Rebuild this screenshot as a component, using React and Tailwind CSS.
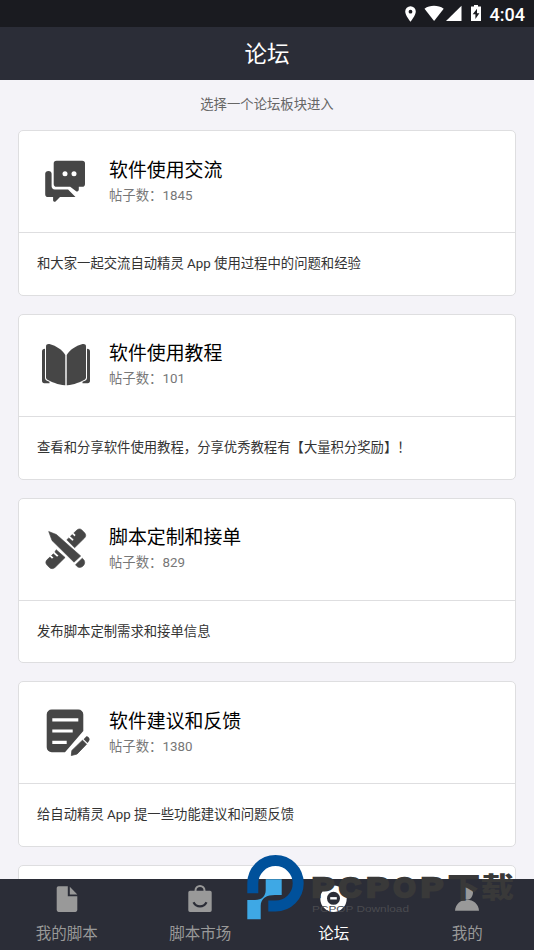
import React from 'react';

const ChatIcon = () => (
  <svg viewBox="0 0 48 48" className="size-12 -translate-y-px" fill="#464646">
    <path d="M14.5 3.7h25.7a2.8 2.8 0 0 1 2.8 2.8v20.4a2.8 2.8 0 0 1-2.8 2.8h-3.4v2.6c0 2-1.4 2.7-3 1.6l-5.6-4.2H14.5a2.8 2.8 0 0 1-2.8-2.8V6.5a2.8 2.8 0 0 1 2.8-2.8Z" />
    <path d="M6.5 14c2 0 3.1 1.2 3.1 2.8v12.5c0 2 1.3 3.2 3.2 3.2h13.3l7.4 7.5H18l-4.2 4.3c-1 1-2.7.5-2.7-1V40H6a2.8 2.8 0 0 1-2.8-2.8V16.8c0-1.6 1.3-2.8 3.3-2.8Z" />
    <circle cx="23" cy="16.8" r="2.5" fill="#fff" />
    <circle cx="32" cy="16.8" r="2.5" fill="#fff" />
  </svg>
);

const BookIcon = () => (
  <svg viewBox="0 0 48 48" className="size-12" fill="#464646">
    <path d="M4 5.5C4 3.2 6 2.7 8.2 3.3 14 5 20 8.5 23.3 14v30.2C17.5 44.5 8.5 40.5 5 38.5 4.3 38 4 37.3 4 36.5Z" />
    <path d="M44 5.5c0-2.3-2-2.8-4.2-2.2C34 5 28 8.5 24.7 14v30.2c5.8.3 14.8-3.7 18.3-5.700.7-.5 1-1.200 1-2Z" />
    <path d="M3 7.8C1 8 0 8.8 0 10.5v29.300c0 1.500.8 2.500 2.300 2.500h5.200v-1.500C4.5 40 3 38.800 3 37Z" />
    <path d="M45 7.8c2 .2 3 1 3 2.700v29.300c0 1.500-.8 2.500-2.300 2.500h-5.200v-1.500C43.500 40 45 38.800 45 37Z" />
  </svg>
);

const ToolsIcon = () => (
  <svg viewBox="0 0 48 48" className="size-12" fill="#464646" stroke="#464646" strokeWidth="0.6" strokeLinejoin="round">
    <path d="m6.700 6.500 7.700 3L38.700 31 32 37.200 10 15.500Z" />
    <path d="m40.300 33.200 1.700 2c2 3-.8 7.300-4.500 7.300-1.400 0-2.800-1.200-4-2.800Z" />
    <path d="m24.800 14.800 2-1.900 3.600 3.100 1.600-1.500-3.600-3.200 1.800-1.700 2.200 1.900 1.600-1.500-2.200-2 3.100-2.900c1.600-1.500 3.500-1.500 4.900-.2l2.800 2.900c1.500 1.700 1.500 3.700-.1 5.300l-9.900 9.700Z" />
    <path d="m14.200 24.700 8.900 7.800-9.600 9.500c-2 2-4.300 2.200-6.200.4L5 40.100c-1.700-1.800-1.500-3.800.2-5.500l2.700-2.500 2.100 2 1.700-1.600-2.200-2 1.800-1.700 3.800 3.300 1.600-1.500-3.800-3.500Z" />
  </svg>
);

const NoteIcon = () => (
  <svg viewBox="0 0 48 48" className="size-12" fill="#464646">
    <path d="M9.7.5h26.600a5 5 0 0 1 5 5V22L23 43.300H9.700a5 5 0 0 1-5-5V5.500a5 5 0 0 1 5-5Z" />
    <path d="M10.3 10.8h26M10.3 22h20.400M10.3 33.300h14.400" stroke="#fff" strokeWidth="3.2" />
    <path d="m40.500 31.200 4 4-9.400 9.800-5.800 1.500.6-5Z" stroke="#464646" strokeWidth="0.8" strokeLinejoin="round" />
    <path d="m44.200 27.400c1-.7 3.400 1.500 3.400 2.900 0 1-1 2.500-2 3.600l-4-3.600Z" />
  </svg>
);

const FileIcon = () => (
  <svg viewBox="0 0 28 28" className="size-7" fill="currentColor">
    <path d="M5.5 1.3h9.300v10h9.500v13.800a1.800 1.800 0 0 1-1.800 1.800h-17a1.800 1.800 0 0 1-1.800-1.800v-22a1.800 1.800 0 0 1 1.800-1.800Z" />
    <path d="m16.800 1.800 7.500 7.600h-7.500Z" />
  </svg>
);

const BagIcon = () => (
  <svg viewBox="0 0 28 28" className="size-7" fill="currentColor">
    <path d="M4 5.7h20a1.700 1.700 0 0 1 1.700 1.700v17.800A1.700 1.700 0 0 1 24 26.900H4a1.700 1.700 0 0 1-1.700-1.700V7.400A1.700 1.700 0 0 1 4 5.700Z" />
    <path d="M9.500 7V5.500a4.500 4.500 0 0 1 9 0V7" fill="none" stroke="currentColor" strokeWidth="2" />
    <path d="M7.500 17.300c2.800 5.500 10.200 5.500 13 0" fill="none" stroke="#2b2d37" strokeWidth="2.2" />
  </svg>
);

const ForumIcon = () => (
  <svg viewBox="0 0 28 28" className="size-7" fill="none">
    <circle cx="13.5" cy="13.7" r="13.2" fill="#fff" />
    <circle cx="13.5" cy="13.3" r="6.5" fill="#2b2d37" />
    <path d="M10.2 13.3h6.600" stroke="#fff" strokeWidth="2.4" />
  </svg>
);

const UserIcon = () => (
  <svg viewBox="0 0 28 28" className="size-7" fill="currentColor">
    <path d="M14 1.500c3.400 0 6 2.700 6 6 0 3.400-2.400 7.300-6 7.300s-6-3.900-6-7.300c0-3.300 2.600-6 6-6Z" />
    <path d="M2 25.700c.3-6.400 5.600-11 12-11s11.700 4.600 12 11Z" />
  </svg>
);

const boards = [
  { title: '软件使用交流', count: 1845, desc: '和大家一起交流自动精灵 App 使用过程中的问题和经验', Icon: ChatIcon },
  { title: '软件使用教程', count: 101, desc: '查看和分享软件使用教程，分享优秀教程有【大量积分奖励】！', Icon: BookIcon },
  { title: '脚本定制和接单', count: 829, desc: '发布脚本定制需求和接单信息', Icon: ToolsIcon },
  { title: '软件建议和反馈', count: 1380, desc: '给自动精灵 App 提一些功能建议和问题反馈', Icon: NoteIcon },
];

const tabs = [
  { label: '我的脚本', Icon: FileIcon },
  { label: '脚本市场', Icon: BagIcon },
  { label: '论坛', Icon: ForumIcon, active: true },
  { label: '我的', Icon: UserIcon },
];

const StatusBar = () => (
  <div className="flex h-[27px] shrink-0 items-center justify-end bg-[#1a1b20] pr-[9px] text-white">
    <svg viewBox="0 0 76 20" width="76" height="20" fill="#fff" className="mr-[9px]">
      <path fillRule="evenodd" d="M5.5 2.300a5.300 5.300 0 0 0-5.300 5.300c0 3.900 5.300 10.200 5.300 10.200s5.300-6.300 5.300-10.200a5.300 5.300 0 0 0-5.300-5.300Zm0 3.500a1.900 1.900 0 1 1 0 3.800 1.900 1.900 0 0 1 0-3.800Z" />
      <path d="M19.500 4.700C25 .9 33 .9 38.700 4.700L29.100 17Z" />
      <path d="M56.500 1.700V17H41Z" />
      <path d="M69 1h4v1.500h3V17H66V2.500h3Z" />
      <path d="m72 4.800-4.300 5.500h2.700V15l4-5.800H72Z" fill="#1a1b20" />
    </svg>
    <span className="translate-y-px text-[18px] leading-none font-medium">4:04</span>
  </div>
);

const BoardCard = ({ board }) => {
  const { title, count, desc, Icon } = board;
  return (
    <div className="h-[165.8px] shrink-0 rounded-[5px] border border-[#dedee0] bg-white">
      <div className="flex h-[102px] items-center border-b border-[#dedee0] pl-[23px]">
        <Icon />
        <div className="ml-[19px] pt-0.5">
          <h2 className="text-[18.9px] leading-[26px] text-black">{title}</h2>
          <p className="text-[13.35px] leading-[24px] text-[#777]">帖子数：{count}</p>
        </div>
      </div>
      <p className="px-[18px] pt-[21px] text-[13.35px] leading-5 whitespace-nowrap text-[#333]">{desc}</p>
    </div>
  );
};

const TabBar = () => (
  <nav className="grid h-[71px] shrink-0 grid-cols-4 bg-[#2b2d37]">
    {tabs.map(({ label, Icon, active }) => (
      <div
        key={label}
        className={`flex flex-col items-center pt-1.5 ${active ? 'text-white' : 'text-[#999]'}`}
      >
        <Icon />
        <span className="mt-[9px] text-[15.5px] leading-6">{label}</span>
      </div>
    ))}
  </nav>
);

const brandLetters = [
  { char: 'P', x: 72 },
  { char: 'C', x: 99 },
  { char: 'P', x: 126.5 },
  { char: 'O', x: 153.5 },
  { char: 'P', x: 181 },
];

// Brand mark floating over the bottom of the page
const Watermark = () => (
  <svg viewBox="0 0 280 75" width="280" height="75" className="absolute top-[850px] left-[240px]">
    <path d="M12.8 43.3V33.3A22.700 22.700 0 1 1 35.500 56H28.300" fill="none" stroke="#00519b" strokeWidth="11" />
    <path d="M25.7 29.3h16V45H35c-8 0-14.300 3-14.300 11v13.300H7.300V50H15c7 0 10.700-4 10.700-10Z" fill="#3ea8e5" />
    <g fill="#393939" stroke="#393939" strokeWidth="2.6" fontSize="27" fontWeight="700" fontFamily="Liberation Sans, sans-serif">
      {brandLetters.map(({ char, x }) => (
        <text key={x} x={x} y="47" textLength="22" lengthAdjust="spacingAndGlyphs">{char}</text>
      ))}
    </g>
    <text x="207" y="47.5" fontSize="28" fontWeight="900" fill="#393939" textLength="67" lengthAdjust="spacingAndGlyphs" fontFamily="Noto Sans CJK SC, sans-serif">下载</text>
    <text x="72" y="61.5" fontSize="9.5" textLength="97" lengthAdjust="spacingAndGlyphs" fill="#4a4b50" fontFamily="Liberation Sans, sans-serif">PCPOP Download</text>
  </svg>
);

export default function App() {
  return (
    <div className="relative flex h-[950px] w-[534px] flex-col overflow-hidden bg-[#f4f3f8] font-[Roboto,'Noto_Sans_CJK_SC',sans-serif]">
      <StatusBar />
      <header className="flex h-[53px] shrink-0 items-center justify-center bg-[#2b2d37] pt-0.5 text-[22.5px] text-white">
        论坛
      </header>
      <main className="flex min-h-0 flex-1 flex-col overflow-hidden px-[18px]">
        <p className="h-[50px] shrink-0 pt-[15px] text-center text-[13.35px] leading-5 text-[#666]">选择一个论坛板块进入</p>
        <div className="flex flex-col gap-[18px]">
          {boards.map((board) => (
            <BoardCard key={board.title} board={board} />
          ))}
          <div className="h-10 shrink-0 rounded-[5px] border border-[#dedee0] bg-white" />
        </div>
      </main>
      <TabBar />
      <Watermark />
    </div>
  );
}
